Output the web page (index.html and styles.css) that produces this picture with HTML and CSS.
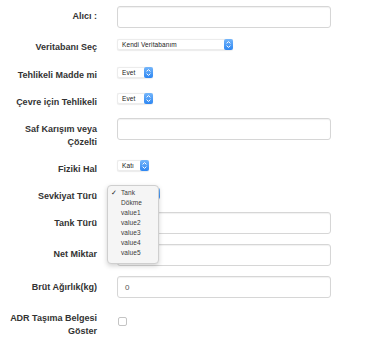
FILE: index.html
```html
<!DOCTYPE html>
<html lang="tr">
<head>
<meta charset="utf-8">
<title>Form</title>
<link rel="stylesheet" href="styles.css">
</head>
<body>
<form class="form">
  <label class="lbl lbl-input">Alıcı :</label>
  <div class="ctl"><div class="input"></div></div>

  <label class="lbl lbl-select">Veritabanı Seç</label>
  <div class="ctl"><div class="select select-wide"><span class="sel-text">Kendi Veritabanım</span><span class="stepper"><svg width="9" height="11" viewBox="0 0 9 11"><path d="M2.6 4.4 L4.5 2.6 L6.4 4.4 M2.6 6.6 L4.5 8.4 L6.4 6.6" fill="none" stroke="#fff" stroke-width="1"/></svg></span></div></div>

  <label class="lbl lbl-select">Tehlikeli Madde mi</label>
  <div class="ctl"><div class="select select-evet"><span class="sel-text">Evet</span><span class="stepper"><svg width="9" height="11" viewBox="0 0 9 11"><path d="M2.6 4.4 L4.5 2.6 L6.4 4.4 M2.6 6.6 L4.5 8.4 L6.4 6.6" fill="none" stroke="#fff" stroke-width="1"/></svg></span></div></div>

  <label class="lbl lbl-select2">Çevre için Tehlikeli</label>
  <div class="ctl"><div class="select select-evet"><span class="sel-text">Evet</span><span class="stepper"><svg width="9" height="11" viewBox="0 0 9 11"><path d="M2.6 4.4 L4.5 2.6 L6.4 4.4 M2.6 6.6 L4.5 8.4 L6.4 6.6" fill="none" stroke="#fff" stroke-width="1"/></svg></span></div></div>

  <label class="lbl lbl-input2">Saf Karışım veya<br>Çözelti</label>
  <div class="ctl"><div class="input"></div></div>

  <label class="lbl lbl-select2">Fiziki Hal</label>
  <div class="ctl"><div class="select select-kati"><span class="sel-text">Katı</span><span class="stepper"><svg width="9" height="11" viewBox="0 0 9 11"><path d="M2.6 4.4 L4.5 2.6 L6.4 4.4 M2.6 6.6 L4.5 8.4 L6.4 6.6" fill="none" stroke="#fff" stroke-width="1"/></svg></span></div></div>

  <label class="lbl lbl-select2">Sevkiyat Türü</label>
  <div class="ctl ctl-pop">
    <div class="select select-sevk"><span class="sel-text"></span><span class="stepper"><svg width="9" height="11" viewBox="0 0 9 11"><path d="M2.6 4.4 L4.5 2.6 L6.4 4.4 M2.6 6.6 L4.5 8.4 L6.4 6.6" fill="none" stroke="#fff" stroke-width="1"/></svg></span></div>
    <ul class="popup">
      <li class="opt checked">Tank</li>
      <li class="opt">Dökme</li>
      <li class="opt">value1</li>
      <li class="opt">value2</li>
      <li class="opt">value3</li>
      <li class="opt">value4</li>
      <li class="opt">value5</li>
    </ul>
  </div>

  <label class="lbl lbl-input2">Tank Türü</label>
  <div class="ctl"><div class="input"></div></div>

  <label class="lbl lbl-input">Net Miktar</label>
  <div class="ctl"><div class="input"></div></div>

  <label class="lbl lbl-input2">Brüt Ağırlık(kg)</label>
  <div class="ctl"><div class="input"><span class="val">0</span></div></div>

  <label class="lbl lbl-check">ADR Taşıma Belgesi<br>Göster</label>
  <div class="ctl"><span class="checkbox"></span></div>
</form>
</body>
</html>
```

FILE: styles.css
```css
html, body {
  margin: 0;
  padding: 0;
  background: #ffffff;
}

.form {
  display: grid;
  grid-template-columns: 97px 214px;
  column-gap: 20px;
  grid-template-rows: 33px 28px 26px 25px 42px 27px 25px 32px 32px 36px 30px;
  padding-top: 6px;
  font-family: "Liberation Sans", Arial, sans-serif;
}

.lbl {
  align-self: start;
  text-align: right;
  font-size: 9px;
  font-weight: bold;
  line-height: 13px;
  color: #333333;
  white-space: nowrap;
}

.lbl-input { padding-top: 4px; }
.lbl-input2 { padding-top: 5px; }
.lbl-select { padding-top: 2px; }
.lbl-select2 { padding-top: 3px; }
.lbl-check { padding-top: 0; }

.ctl {
  align-self: start;
  display: flex;
  align-items: flex-start;
}

.ctl-pop {
  position: relative;
}

.input {
  box-sizing: border-box;
  width: 214px;
  height: 22px;
  border: 1px solid #d6d6d6;
  border-radius: 3px;
  background: #fff;
  box-shadow: inset 0 1px 1px rgba(0, 0, 0, 0.06);
  display: flex;
  align-items: center;
  padding-left: 7px;
}

.val {
  font-size: 8px;
  color: #555555;
}

.select {
  box-sizing: border-box;
  height: 11px;
  display: flex;
  align-items: stretch;
  justify-content: space-between;
  background: #ffffff;
  border: 1px solid #ececec;
  border-right: none;
  border-radius: 2px;
  box-shadow: 0 0.5px 1px rgba(0, 0, 0, 0.08);
}

.select-wide { width: 116px; }
.select-evet { width: 36px; }
.select-kati { width: 32px; }
.select-sevk { width: 43px; margin-top: 1px; }

.sel-text {
  font-size: 6.5px;
  line-height: 9px;
  color: #222222;
  padding-left: 4px;
  letter-spacing: 0.1px;
}

.stepper {
  width: 9px;
  margin: -1px 0;
  height: 11px;
  border-radius: 2px;
  background: linear-gradient(#74b6fb, #2d86f2);
  display: flex;
}

.stepper svg {
  display: block;
}

.checkbox {
  display: block;
  box-sizing: border-box;
  width: 9px;
  height: 9px;
  margin-top: 5px;
  margin-left: 1px;
  border: 1px solid #c4c4c4;
  border-radius: 2px;
  background: #fff;
}

.popup {
  position: absolute;
  left: -10px;
  top: -2px;
  width: 52px;
  box-sizing: border-box;
  margin: 0;
  padding: 2px 0 5px 0;
  list-style: none;
  background: #f5f5f5;
  border: 1px solid #cfcfcf;
  border-radius: 4px;
  box-shadow: 0 2px 5px rgba(0, 0, 0, 0.18);
}

.opt {
  position: relative;
  font-size: 6.5px;
  line-height: 10px;
  color: #3a3a3a;
  padding-left: 13px;
  letter-spacing: 0.1px;
}

.opt.checked::before {
  content: "✓";
  position: absolute;
  left: 3px;
  top: 0;
  font-size: 7px;
  color: #222;
}
```
